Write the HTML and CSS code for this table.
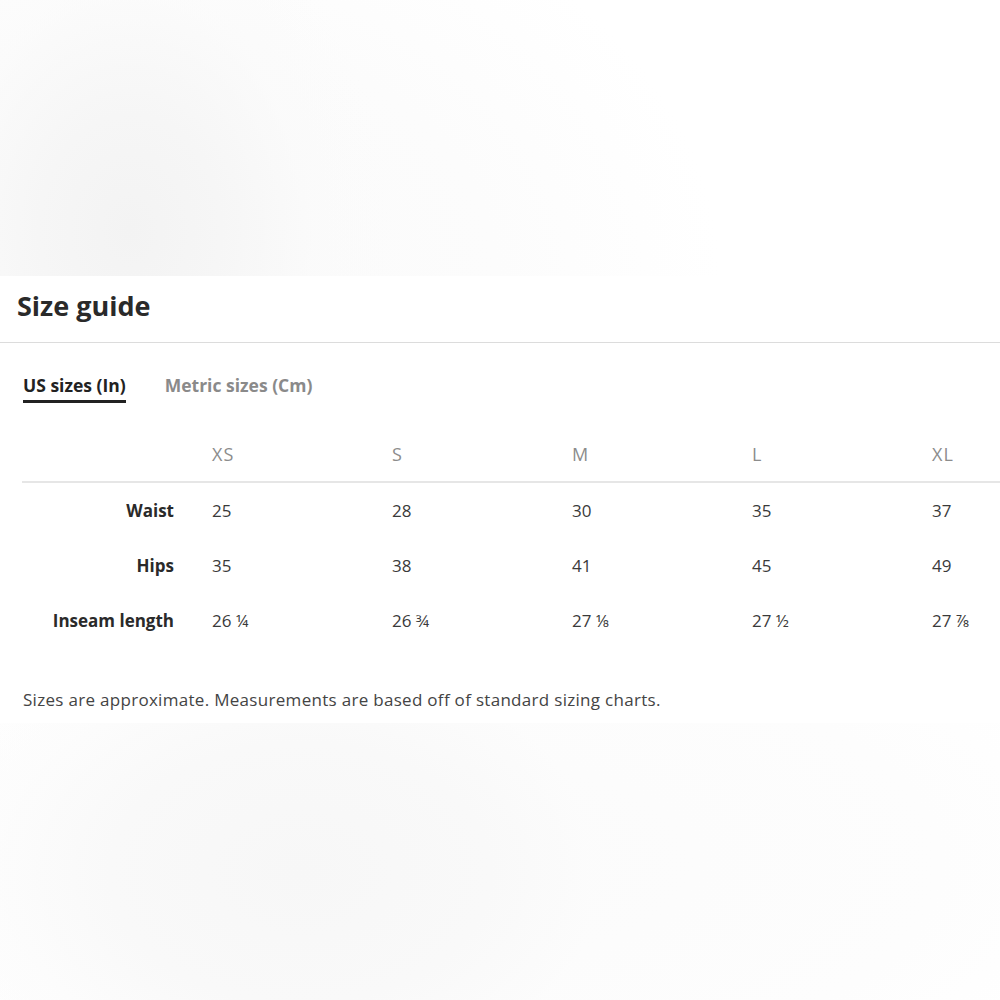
FILE: index.html
```html
<!DOCTYPE html>
<html lang="en">
<head>
<meta charset="utf-8">
<title>Size guide</title>
<link rel="stylesheet" href="styles.css">
</head>
<body>
<div class="backdrop backdrop-top"></div>
<section class="panel">
  <h1 class="title">Size guide</h1>
  <div class="body">
    <nav class="tabs">
      <span class="tab tab-active">US sizes (In)</span>
      <span class="tab">Metric sizes (Cm)</span>
    </nav>
    <div class="chart">
      <div class="row head">
        <span class="label"></span>
        <span class="cell">XS</span>
        <span class="cell">S</span>
        <span class="cell">M</span>
        <span class="cell">L</span>
        <span class="cell">XL</span>
      </div>
      <div class="row">
        <span class="label">Waist</span>
        <span class="cell">25</span>
        <span class="cell">28</span>
        <span class="cell">30</span>
        <span class="cell">35</span>
        <span class="cell">37</span>
      </div>
      <div class="row">
        <span class="label">Hips</span>
        <span class="cell">35</span>
        <span class="cell">38</span>
        <span class="cell">41</span>
        <span class="cell">45</span>
        <span class="cell">49</span>
      </div>
      <div class="row">
        <span class="label">Inseam length</span>
        <span class="cell">26 ¼</span>
        <span class="cell">26 ¾</span>
        <span class="cell">27 ⅛</span>
        <span class="cell">27 ½</span>
        <span class="cell">27 ⅞</span>
      </div>
    </div>
    <p class="note">Sizes are approximate. Measurements are based off of standard sizing charts.</p>
  </div>
</section>
<div class="backdrop backdrop-bottom"></div>
</body>
</html>
```

FILE: styles.css
```css
html, body {
  margin: 0;
  padding: 0;
}
body {
  width: 1000px;
  height: 1000px;
  overflow: hidden;
  background: #ffffff;
  font-family: "Open Sans", "Lato", sans-serif;
  color: #2b2b2b;
  display: flex;
  flex-direction: column;
}
.backdrop {
  flex: none;
}
.backdrop-top {
  height: 276px;
  background:
    radial-gradient(ellipse 260px 330px at 130px 230px, #f3f3f3 0%, #f6f6f6 35%, rgba(250,250,250,0.6) 70%, rgba(255,255,255,0) 100%),
    radial-gradient(ellipse 560px 420px at 160px 280px, #fafafa 0%, #fcfcfc 60%, #ffffff 100%);
}
.backdrop-bottom {
  flex: 1;
  background:
    radial-gradient(ellipse 380px 260px at 300px 150px, #f7f7f7 0%, #f9f9f9 50%, rgba(252,252,252,0.7) 80%, rgba(255,255,255,0) 100%),
    radial-gradient(ellipse 700px 300px at 450px 140px, #fbfbfb 0%, #fdfdfd 70%, #ffffff 100%);
}
.panel {
  flex: none;
  background: #ffffff;
  padding-bottom: 12px;
}
.title {
  margin: 0;
  height: 67px;
  display: flex;
  align-items: center;
  padding-left: 17px;
  padding-bottom: 8px;
  font-size: 27px;
  font-weight: 700;
  color: #2a2a2a;
  border-bottom: 1px solid #dcdcdc;
  box-sizing: border-box;
}
.body {
  padding: 0 0 0 22px;
}
.tabs {
  display: flex;
  gap: 39px;
  padding-top: 32px;
  padding-left: 1px;
}
.tab {
  font-size: 17.5px;
  font-weight: 700;
  color: #8a8a8a;
  padding-bottom: 5px;
  line-height: 20px;
  border-bottom: 3px solid transparent;
}
.tab-active {
  color: #222222;
  border-bottom-color: #222222;
}
.chart {
  margin-top: 40px;
}
.row {
  display: grid;
  grid-template-columns: 190px repeat(4, 180px) 1fr;
  align-items: center;
  height: 55px;
  font-size: 17px;
  color: #3a3a3a;
}
.row.head {
  height: 38px;
  align-items: start;
  border-bottom: 2px solid #e6e6e6;
  color: #8c8c8c;
  font-size: 18px;
  letter-spacing: 1px;
  line-height: 22px;
}
.label {
  text-align: right;
  padding-right: 38px;
  font-weight: 700;
  color: #2a2a2a;
}
.note {
  margin: 40px 0 0 1px;
  font-size: 17px;
  letter-spacing: 0.3px;
  color: #444444;
}
```
